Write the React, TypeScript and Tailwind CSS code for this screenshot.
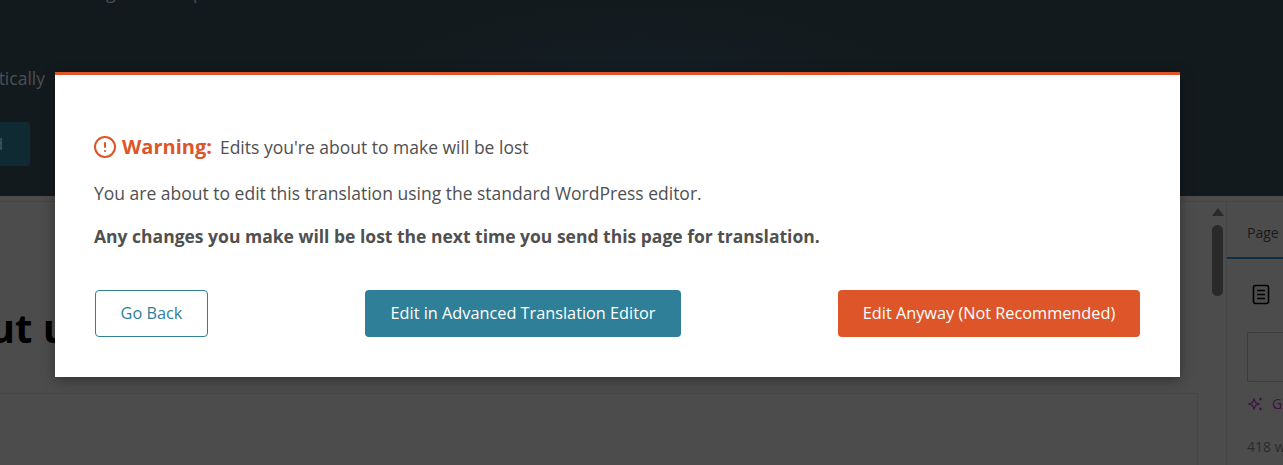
import { CircleAlert } from 'lucide-react';

function HeaderBackdrop() {
  return (
    <header className="h-[196px] shrink-0 overflow-hidden bg-[radial-gradient(ellipse_300px_130px_at_640px_130px,#13202a,#131a1d)]">
      <p className="-mt-[20px] ml-[50px] whitespace-nowrap text-[17.5px] leading-[24px] text-[#4a5052]">Sending the sites parts</p>
      <div className="mt-[62px] flex w-[45px] justify-end overflow-hidden whitespace-nowrap text-[17.5px] leading-[24px] text-[#4a5052]">
        automatically
      </div>
      <div className="mt-[32px] flex h-[44px] w-[30px] items-center justify-end rounded-r-[4px] bg-[#0f2a33] pr-[27px] text-[16px] text-[#47585d]">
        d
      </div>
    </header>
  );
}

function EditorBackdrop() {
  return (
    <div className="flex min-h-0 flex-1 flex-col bg-[#4c4c4c]">
      <div className="h-[6px] shrink-0 border-b border-[#454545]" />
      <div className="flex min-h-0 flex-1">
        <main className="min-w-0 flex-1 overflow-hidden">
          <div className="h-[192px] border-b border-[#454545]">
            <div className="flex w-[89px] justify-end overflow-hidden pt-[99px] text-[40px] leading-[54px] font-bold whitespace-nowrap text-black">
              ut us
            </div>
          </div>
          <div className="h-full border-r border-[#454545]" />
        </main>
        <div className="flex w-[28px] shrink-0 flex-col items-center pt-[6px] pl-[11px]">
          <div className="h-0 w-0 border-x-[6px] border-b-[8px] border-x-transparent border-b-[#2a2a2a]" />
          <div className="mt-[9px] h-[71px] w-[11px] rounded-full bg-[#2a2a2a]" />
        </div>
        <aside className="w-[57px] shrink-0 overflow-hidden border-l border-[#454545] text-[14px] whitespace-nowrap">
          <div className="h-[57px] border-b-2 border-[#0b2f45] pt-[20px] pl-[20px] text-[#1a1a1a]">Page</div>
          <svg className="mt-[25px] ml-[25px]" width="20" height="22" viewBox="0 0 20 22" fill="none" stroke="#000" strokeWidth="1.6">
            <rect x="1.500" y="1.500" width="15" height="18" rx="2" />
            <path d="M5 6.500h8M5 10.500h8M5 14.500h8" />
          </svg>
          <div className="mt-[26px] ml-[20px] h-[50px] rounded-l-[2px] border border-r-0 border-[#3c3c3c]" />
          <div className="mt-[11px] ml-[21px] flex items-center gap-[8px] text-[#3d1040]">
            <svg className="shrink-0" width="16" height="16" viewBox="0 0 16 16" fill="none" stroke="#3d1040" strokeWidth="1.1">
              <path d="M6 3l1.500 3.500L11 8 7.500 9.500 6 13 4.500 9.500 1 8l3.500-1.500z" />
              <path d="M12.500 1.500v3M11 3h3M12.500 11.500v3M11 13h3" />
            </svg>
            <span>Generate</span>
          </div>
          <div className="mt-[22px] ml-[20px] text-[#2b2b2b]">418 words</div>
        </aside>
      </div>
    </div>
  );
}

export default function App() {
  return (
    <div className="relative flex h-[465px] w-[1283px] flex-col overflow-hidden bg-[#4c4c4c] font-['Open_Sans',sans-serif]">
      <HeaderBackdrop />
      <EditorBackdrop />

      <div className="absolute top-[72px] left-[55px] h-[305px] w-[1125px] border-t-[3px] border-[#dd5528] bg-white px-[40px] pt-[57px] text-[#505050] shadow-[0_3px_12px_rgba(0,0,0,0.35)]">
        <div className="flex h-[30px] items-center text-[17.5px]">
          <CircleAlert className="-ml-[2px] size-[24px] text-[#dd5528]" strokeWidth={2} />
          <strong className="ml-[5px] text-[20px] font-bold text-[#dd5528]">Warning:</strong>
          <span className="ml-[8px]">Edits you're about to make will be lost</span>
        </div>
        <p className="mt-[16px] -ml-px text-[17.5px] leading-[30px]">
          You are about to edit this translation using the standard WordPress editor.
        </p>
        <p className="mt-[13px] -ml-px text-[17.5px] leading-[30px] font-bold">
          Any changes you make will be lost the next time you send this page for translation.
        </p>
        <div className="mt-[39px] flex items-center justify-between text-[16.3px]">
          <button className="h-[47px] w-[113px] rounded-[4px] border border-[#2e7f97] bg-white text-[#2e7f97]">Go Back</button>
          <button className="h-[47px] w-[316px] rounded-[4px] bg-[#2e7f97] text-white">Edit in Advanced Translation Editor</button>
          <button className="h-[47px] w-[302px] rounded-[4px] bg-[#dd5528] text-white">Edit Anyway (Not Recommended)</button>
        </div>
      </div>
    </div>
  );
}
